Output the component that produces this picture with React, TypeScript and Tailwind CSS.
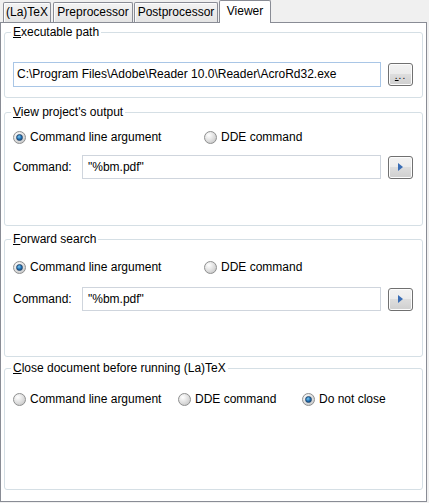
import React from "react";

const font = "font-['Liberation_Sans',Arial,sans-serif] text-[12px] text-black";

const Radio = ({ checked, label, className = "" }: { checked?: boolean; label: string; className?: string }) => (
  <div className={`flex items-center h-[15px] ${className}`}>
    <span className="w-[13px] h-[13px] rounded-full border border-[#8e8f8f] bg-[radial-gradient(circle_at_35%_30%,#ffffff,#dcdcdc_55%,#bdbdbd)] flex items-center justify-center shrink-0">
      {checked && (
        <span className="w-[7px] h-[7px] rounded-full bg-[radial-gradient(circle_at_40%_35%,#7dcaf2,#1c6bb0_55%,#0d3b6b)] border border-[#24496f]" />
      )}
    </span>
    <span className="ml-[4px] leading-[15px] whitespace-nowrap">{label}</span>
  </div>
);

const WinButton = ({ children }: { children: React.ReactNode }) => (
  <button className="w-[25px] h-[23px] rounded-[3px] border border-[#707070] bg-[linear-gradient(#f2f2f2,#ebebeb_50%,#dddddd_50%,#cfcfcf)] flex items-center justify-center shadow-[inset_0_0_0_1px_#fcfcfc]">
    {children}
  </button>
);

const Legend = ({ accel, rest }: { accel: string; rest: string }) => (
  <legend className="-ml-[2px] px-[2px] leading-[16px]">
    <u>{accel}</u>
    {rest}
  </legend>
);

const CommandRow = () => (
  <div className="flex items-center">
    <span className="w-[69px] leading-[15px]">Command:</span>
    <div className="w-[299px] h-[24px] border border-[#cfd5dd] bg-white pl-[5px] flex items-center leading-[15px]">
      "%bm.pdf"
    </div>
    <div className="ml-[7px]">
      <WinButton>
        <svg width="5" height="8" viewBox="0 0 5 8">
          <path d="M0 0 L5 4 L0 8 Z" fill="#3a6db5" />
        </svg>
      </WinButton>
    </div>
  </div>
);

const tabBase = "h-[20px] border border-b-0 border-[#898c95] rounded-t-[2px] bg-[linear-gradient(#f3f3f3,#e4e4e4)] text-center leading-[19px] shadow-[inset_1px_1px_0_#fcfcfc]";

export default function App() {
  return (
    <div className={`w-[429px] h-[503px] bg-[#f0f0f0] ${font}`}>
      <div className="flex items-end h-[22px]">
        <div className={`${tabBase} ml-[3px] w-[48px]`}>(La)TeX</div>
        <div className={`${tabBase} ml-[2px] w-[80px]`}>Preprocessor</div>
        <div className={`${tabBase} ml-[1px] w-[84px]`}>Postprocessor</div>
        <div className="relative z-10 -mb-px ml-[1px] w-[52px] h-[23px] border border-b-0 border-[#898c95] rounded-t-[2px] bg-white text-center leading-[20px]">
          Viewer
        </div>
      </div>
      <div className="w-[427px] h-[480px] border border-[#898c95] bg-white pl-[3px]">
        <fieldset className="mt-[1px] w-[419px] h-[74px] border border-[#d5dfe5] rounded-[3px] pl-[8px] pt-[22px]">
          <Legend accel="E" rest="xecutable path" />
          <div className="flex items-center">
            <div className="w-[368px] h-[25px] border border-[#a9c6e6] bg-white pl-[3px] flex items-center leading-[15px] whitespace-nowrap">
              C:\Program Files\Adobe\Reader 10.0\Reader\AcroRd32.exe
            </div>
            <div className="ml-[7px]">
              <WinButton>
                <span className="text-[10px] leading-[10px] tracking-[1px] mt-[3px]">
                  <u>.</u>..
                </span>
              </WinButton>
            </div>
          </div>
        </fieldset>

        <fieldset className="mt-[6px] w-[419px] h-[122px] border border-[#d5dfe5] rounded-[3px] pl-[8px] pt-[10px]">
          <Legend accel="V" rest="iew project's output" />
          <div className="flex">
            <Radio checked label="Command line argument" className="w-[191px]" />
            <Radio label="DDE command" />
          </div>
          <div className="mt-[10px]">
            <CommandRow />
          </div>
        </fieldset>

        <fieldset className="mt-[5px] w-[419px] h-[126px] border border-[#d5dfe5] rounded-[3px] pl-[8px] pt-[13px]">
          <Legend accel="F" rest="orward search" />
          <div className="flex">
            <Radio checked label="Command line argument" className="w-[191px]" />
            <Radio label="DDE command" />
          </div>
          <div className="mt-[12px]">
            <CommandRow />
          </div>
        </fieldset>

        <fieldset className="mt-[3px] w-[419px] h-[130px] border border-[#d5dfe5] rounded-[3px] pl-[8px] pt-[16px]">
          <Legend accel="C" rest="lose document before running (La)TeX" />
          <div className="flex">
            <Radio label="Command line argument" className="w-[165px]" />
            <Radio label="DDE command" className="w-[124px]" />
            <Radio checked label="Do not close" />
          </div>
        </fieldset>
      </div>
    </div>
  );
}
